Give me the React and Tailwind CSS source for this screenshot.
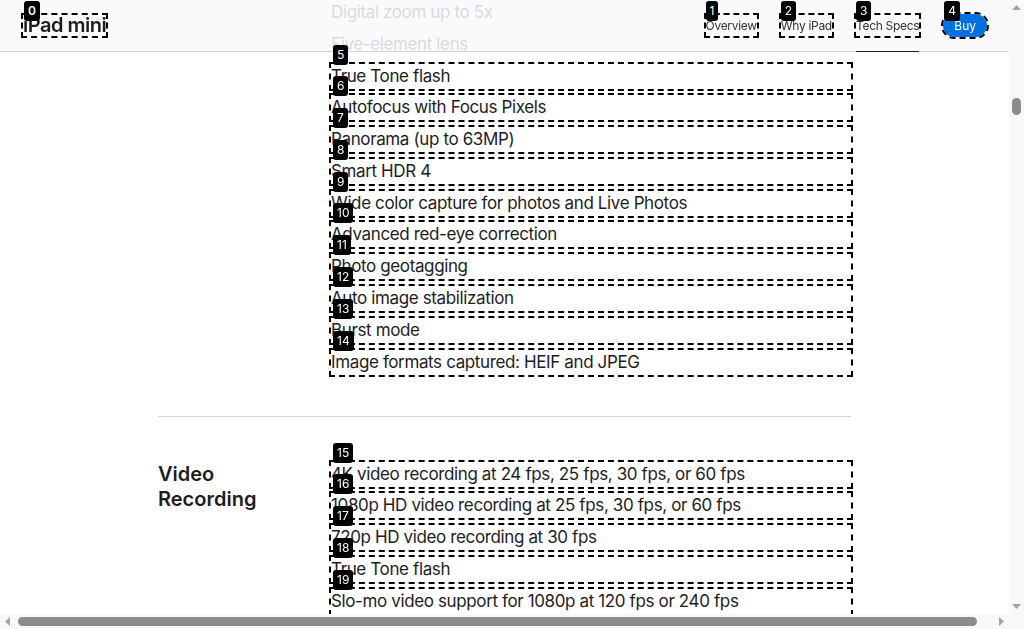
import React, { useLayoutEffect, useRef } from 'react';
import clsx from 'clsx';

const sections = [
    { title: 'Capacity', items: ['128GB', '256GB', '512GB'] },
    {
        title: 'Weight and Dimensions',
        items: [
            'Width: 5.3 inches (134.8 mm)',
            'Height: 7.69 inches (195.4 mm)',
            'Depth: 0.25 inch (6.3 mm)',
            'Weight (Wi-Fi models): 0.65 pound (293 grams)',
            'Weight (Wi-Fi + Cellular models): 0.66 pound (297 grams)',
        ],
    },
    {
        title: 'Display',
        items: [
            'Liquid Retina display',
            '8.3-inch (diagonal) LED-backlit Multi-Touch display with IPS technology',
            '2266-by-1488-pixel resolution at 326 pixels per inch (ppi)',
            '500 nits brightness',
            'Wide color display (P3)',
            'True Tone display',
            'Fingerprint-resistant oleophobic coating',
            'Fully laminated display',
            'Antireflective coating',
            '1.8% reflectivity',
            'Supports Apple Pencil (USB-C) and Apple Pencil Pro',
        ],
    },
    {
        title: 'Chip',
        items: [
            'A17 Pro chip',
            '6-core CPU with 2 performance cores and 4 efficiency cores',
            '5-core GPU',
            'Hardware-accelerated ray tracing',
            '16-core Neural Engine',
            '8GB memory',
        ],
    },
    {
        title: 'Camera',
        anchor: 2,
        marks: [4, 13, 5],
        items: [
            '12MP Wide camera',
            'ƒ/1.8 aperture',
            'Digital zoom up to 5x',
            'Five-element lens',
            'True Tone flash',
            'Autofocus with Focus Pixels',
            'Panorama (up to 63MP)',
            'Smart HDR 4',
            'Wide color capture for photos and Live Photos',
            'Advanced red-eye correction',
            'Photo geotagging',
            'Auto image stabilization',
            'Burst mode',
            'Image formats captured: HEIF and JPEG',
        ],
    },
    {
        title: 'Video Recording',
        marks: [0, 4, 15],
        items: [
            '4K video recording at 24 fps, 25 fps, 30 fps, or 60 fps',
            '1080p HD video recording at 25 fps, 30 fps, or 60 fps',
            '720p HD video recording at 30 fps',
            'True Tone flash',
            'Slo-mo video support for 1080p at 120 fps or 240 fps',
            'Time-lapse video with stabilization',
            'Extended dynamic range for video up to 30 fps',
            'Cinematic video stabilization (4K, 1080p, and 720p)',
            'Continuous autofocus video',
            'Playback zoom',
            'Video formats recorded: HEVC and H.264',
            'Stereo recording',
        ],
    },
];

// numbered marker that sits on a boxed element
const Tag = ({ n, className }) => (
    <span className={clsx('absolute z-30 h-5 rounded-[3px] bg-black px-1 text-[12px] leading-[19px] tracking-normal text-white', className)}>
        {n}
    </span>
);

const Section = ({ title, items, marks, anchor, anchorRef }) => (
    <section className="flex border-t border-[#d2d2d7] pt-[45px] pb-[41px]">
        <h2 className="w-[173px] shrink-0 pr-6 text-[20px] font-semibold leading-[25px] text-[#1d1d1f]">{title}</h2>
        <ul className="flex flex-1 flex-col gap-[6.78px]">
            {items.map((text, i) => {
                const mark = marks && i >= marks[0] && i <= marks[1] ? marks[2] + i - marks[0] : null;
                return (
                    <li
                        key={text + i}
                        ref={i === anchor ? anchorRef : undefined}
                        className={clsx(
                            'relative text-[17px] leading-[25px] tracking-[-0.374px] text-[#1d1d1f]',
                            mark !== null && 'outline-2 outline-dashed outline-black'
                        )}
                    >
                        {mark !== null && <Tag n={mark} className="left-[2px] -top-[19px]" />}
                        {text}
                    </li>
                );
            })}
        </ul>
    </section>
);

const Arrow = ({ dir }) => {
    const points = {
        up: '0,5 4.5,0 9,5',
        down: '0,0 9,0 4.5,5',
        left: '5,0 5,9 0,4.5',
        right: '0,0 0,9 5,4.5',
    }[dir];
    const vertical = dir === 'up' || dir === 'down';
    return (
        <div className="flex h-[15px] w-[15px] shrink-0 items-center justify-center">
            <svg width={vertical ? 9 : 5} height={vertical ? 5 : 9} viewBox={vertical ? '0 0 9 5' : '0 0 5 9'}>
                <polygon points={points} fill="#a3a3a3" />
            </svg>
        </div>
    );
};

const App = () => {
    const boxRef = useRef(null);
    const anchorRef = useRef(null);

    useLayoutEffect(() => {
        const box = boxRef.current;
        const top = anchorRef.current.getBoundingClientRect().top - box.getBoundingClientRect().top + box.scrollTop;
        box.scrollTop = Math.round(top);
    }, []);

    return (
        <div className="flex h-screen w-screen flex-col overflow-hidden bg-white font-['Inter','Noto_Sans',sans-serif] text-[#1d1d1f]">
            <div className="flex min-h-0 flex-1">
                <div ref={boxRef} className="min-w-0 flex-1 overflow-hidden">
                    {/* Local nav */}
                    <nav className="sticky top-0 z-20 flex h-[52px] items-center justify-between border-b border-[#d2d2d7] bg-[#f9f9fb]/85 px-[22px]">
                        <span className="relative ml-px text-[20px] font-semibold leading-[21px] tracking-[-0.5px] outline-2 outline-dashed outline-black">
                            <Tag n={0} className="left-px -top-[14px]" />
                            iPad mini
                        </span>
                        <div className="flex h-full items-center gap-6 text-[12px] tracking-[-0.3px] text-[#333]">
                            <span className="relative leading-[21px] outline-2 outline-dashed outline-black">
                                <Tag n={1} className="left-0 -top-[14px]" />
                                Overview
                            </span>
                            <span className="relative leading-[21px] outline-2 outline-dashed outline-black">
                                <Tag n={2} className="left-0 -top-[14px]" />
                                Why iPad
                            </span>
                            <div className="relative flex h-full items-center">
                                <span className="relative leading-[21px] outline-2 outline-dashed outline-black">
                                    <Tag n={3} className="left-0 -top-[14px]" />
                                    Tech Specs
                                </span>
                                <span className="absolute -bottom-px left-0 right-0 h-px bg-[#1d1d1f]" />
                            </div>
                            <span className="relative rounded-full bg-[#0071e3] px-[11px] leading-[23px] tracking-normal text-white outline-2 outline-dashed outline-black">
                                <Tag n={4} className="left-px -top-[13px]" />
                                Buy
                            </span>
                        </div>
                    </nav>

                    <main className="mx-auto w-[693px]">
                        <header className="pt-[64px] pb-[56px]">
                            <h1 className="text-[40px] font-semibold leading-[44px]">iPad mini - Technical Specifications</h1>
                            <p className="mt-4 text-[17px] text-[#6e6e73]">Compare iPad models</p>
                        </header>
                        {sections.map((s) => (
                            <Section key={s.title} {...s} anchorRef={anchorRef} />
                        ))}
                    </main>
                </div>

                {/* vertical scrollbar */}
                <div className="flex w-[15px] shrink-0 flex-col bg-[#f8f8f8]">
                    <Arrow dir="up" />
                    <div className="flex-1 pt-[83px]">
                        <div className="mx-auto h-[17px] w-[9px] rounded-full bg-[#8c8c8c]" />
                    </div>
                    <Arrow dir="down" />
                </div>
            </div>

            {/* horizontal scrollbar */}
            <div className="flex h-[15px] shrink-0 bg-[#f8f8f8]">
                <Arrow dir="left" />
                <div className="flex flex-1 items-center pl-[3px]">
                    <div className="h-[9px] w-[959px] rounded-full bg-[#8c8c8c]" />
                </div>
                <Arrow dir="right" />
                <div className="w-[15px]" />
            </div>
        </div>
    );
};

export default App;
